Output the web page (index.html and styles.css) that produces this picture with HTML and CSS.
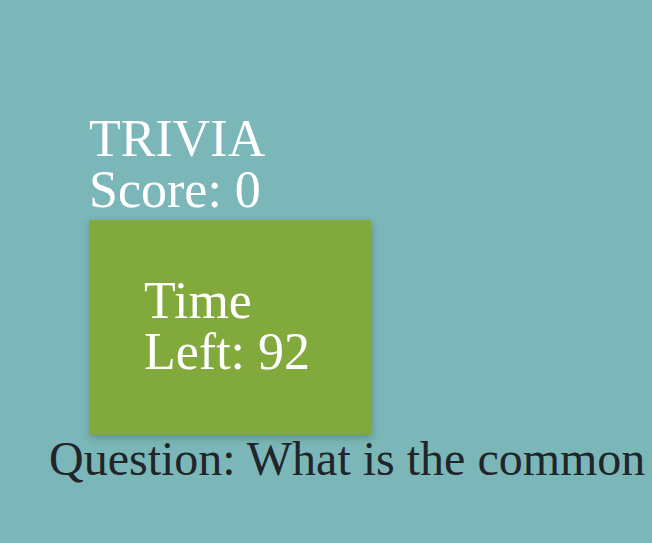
FILE: index.html
```html
<!DOCTYPE html>
<html lang="en">
<head>
    <meta charset="UTF-8">
    <title>Trivia</title>
    <link rel="stylesheet" href="styles.css">
</head>
<body>

<div class="game">
    <div class="header">
        <div class="title">TRIVIA</div>
        <div class="score">Score: <span id="score">0</span></div>
    </div>
    <div class="timer">Time Left: <span id="time">92</span></div>
    <p class="question">Question: What is the common</p>
</div>

</body>
</html>
```

FILE: styles.css
```css
html, body {
    margin: 0;
    overflow: hidden;
}
body {
    background-color: #7bb7b8;
    font-family: "Liberation Serif", "Times New Roman", serif;
    height: 543px;
}
.game {
    display: flex;
    flex-direction: column;
    align-items: flex-start;
    padding-top: 113px;
    padding-left: 49px;
}
.header {
    margin-left: 40px;
    color: white;
    font-size: 52px;
    line-height: 51px;
}
.timer {
    margin-left: 40px;
    margin-top: 5px;
    width: 172px;
    padding: 55px 55px 58px 55px;
    background-color: #82a93c;
    color: white;
    font-size: 52px;
    line-height: 51px;
    box-shadow: 1px 3px 8px rgba(0, 0, 0, 0.22);
}
.question {
    margin: 0;
    color: #212529;
    font-size: 48px;
    line-height: 48px;
    white-space: nowrap;
}
```
